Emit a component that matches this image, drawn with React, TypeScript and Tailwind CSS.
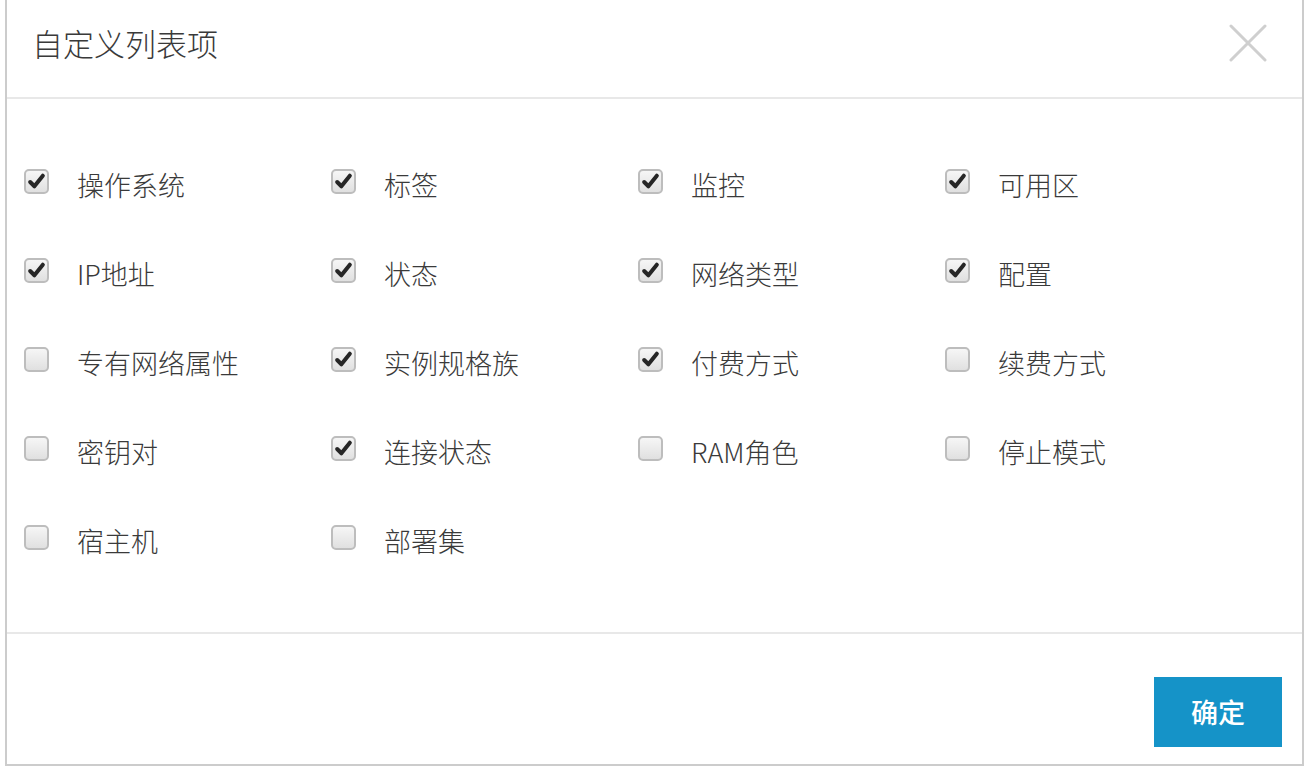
import React from "react";

const items: [string, boolean][] = [
  ["操作系统", true],
  ["标签", true],
  ["监控", true],
  ["可用区", true],
  ["IP地址", true],
  ["状态", true],
  ["网络类型", true],
  ["配置", true],
  ["专有网络属性", false],
  ["实例规格族", true],
  ["付费方式", true],
  ["续费方式", false],
  ["密钥对", false],
  ["连接状态", true],
  ["RAM角色", false],
  ["停止模式", false],
  ["宿主机", false],
  ["部署集", false],
];

function Box({ checked }: { checked: boolean }) {
  return (
    <div className="w-[25px] h-[25px] rounded-[5px] border-2 border-[#bdbdbd] bg-gradient-to-b from-[#f6f6f6] to-[#e0e0e0] flex items-center justify-center shrink-0">
      {checked && (
        <svg width="19" height="19" viewBox="0 0 18 18">
          <path d="M3 9.5 L7 13.5 L15 3.5" fill="none" stroke="#262626" strokeWidth="3.8" strokeLinecap="round" strokeLinejoin="round" />
        </svg>
      )}
    </div>
  );
}

export default function App() {
  return (
    <div className="w-[1312px] h-[772px] bg-white" style={{ fontFamily: '"Noto Sans CJK SC", "Noto Sans", sans-serif' }}>
      <div className="ml-[5px] w-[1299px] h-[766px] border-x-2 border-b-2 border-[#cccccc] flex flex-col">
        <div className="h-[99px] border-b-2 border-[#e8e8e8] flex items-center justify-between pl-[25px] pr-[35px] shrink-0">
          <div className="text-[31px] text-[#3a3a3a] font-light leading-none -mt-[12px]">自定义列表项</div>
          <svg width="38" height="38" viewBox="0 0 38 38" className="-mt-[12px]">
            <path d="M2 2 L36 36 M36 2 L2 36" stroke="#cfcfcf" strokeWidth="3" strokeLinecap="round" />
          </svg>
        </div>
        <div className="flex-1 pl-[17px] pt-[38px]">
          <div className="grid grid-cols-[repeat(4,307px)] auto-rows-[89px]">
            {items.map(([label, checked]) => (
              <div key={label} className="flex items-center">
                <Box checked={checked} />
                <span className="ml-[28px] text-[27px] text-[#3a3a3a] font-light leading-none mt-[6px]">{label}</span>
              </div>
            ))}
          </div>
        </div>
        <div className="h-[132px] border-t-2 border-[#e8e8e8] flex justify-end items-end pr-[20px] pb-[17px] shrink-0">
          <button className="w-[128px] h-[70px] bg-[#1593c8] text-white text-[27px] font-medium">确定</button>
        </div>
      </div>
    </div>
  );
}
